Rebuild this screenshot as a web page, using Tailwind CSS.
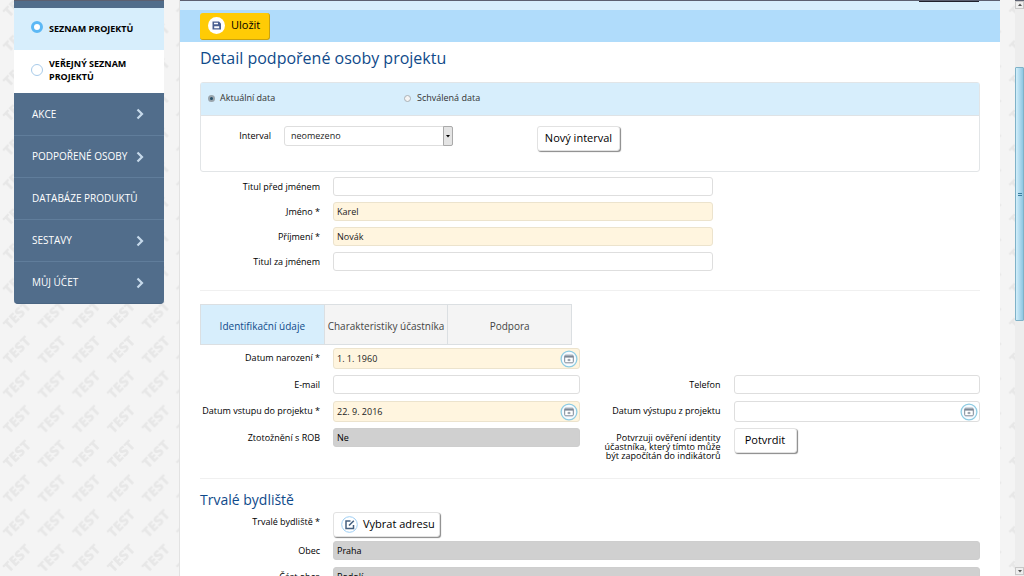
<!DOCTYPE html>
<html lang="cs">
<head>
<meta charset="utf-8">
<title>Detail podpořené osoby projektu</title>
<script src="https://cdn.jsdelivr.net/npm/@tailwindcss/browser@4"></script>
</head>
<body class="relative h-screen overflow-hidden bg-[#f4f4f4] font-['Open_Sans','Noto_Sans',sans-serif] text-[9px] font-medium text-black">
<svg width="0" height="0" class="absolute" aria-hidden="true">
  <symbol id="calendar" viewBox="0 0 18 18">
    <circle cx="9" cy="9" r="7.900" fill="#f7fbff" stroke="#8ccbe2" stroke-width="1.300"/>
    <rect x="4.700" y="5.200" width="8.600" height="7.600" rx="1" fill="#fff" stroke="#7c8896" stroke-width="1"/>
    <path d="M4.700 6.800h8.600" stroke="#7c8896" stroke-width="1.600"/>
    <path d="M7.500 10h3M9 8.800v2.400" stroke="#7c8896" stroke-width="1"/>
  </symbol>
  <symbol id="chevron" viewBox="0 0 8 12">
    <path d="M1.500 1.500L6 6l-4.500 4.500" fill="none" stroke="#c6d9ea" stroke-width="2.200"/>
  </symbol>
</svg>
<svg class="absolute inset-0 h-full w-full" aria-hidden="true">
  <defs>
    <pattern id="watermark" width="34.700" height="34.700" patternUnits="userSpaceOnUse" y="-13">
      <text x="17" y="21" transform="rotate(-45 17 16)" text-anchor="middle" font-family="Open Sans" font-weight="800" font-size="14" fill="#e7e7e7">TEST</text>
    </pattern>
  </defs>
  <rect width="100%" height="100%" fill="url(#watermark)"/>
</svg>

<div class="relative flex h-full">
  <nav class="mr-[15px] ml-[14px] w-[150px] shrink-0 text-[10px]">
    <div class="h-2 border-t border-[#5c6070] bg-[#516d8b]"></div>
    <a href="#" class="flex h-[42px] items-center bg-[#d7eefc] pl-[17px] text-[9px] font-bold"><span class="mr-1.5 mb-1 size-3 rounded-full border-[3px] border-[#5cb8f5] bg-white"></span>SEZNAM PROJEKTŮ</a>
    <a href="#" class="flex h-[43px] items-center bg-white pb-1 pl-[17px] text-[9px] leading-[13px] font-bold"><span class="mr-1.5 size-3 rounded-full border border-[#a8cbea] bg-white"></span><span>VEŘEJNÝ SEZNAM<br>PROJEKTŮ</span></a>
    <ul class="overflow-hidden rounded-b border-b border-[#4a6582] bg-[#516d8b] text-white">
      <li><a href="#" class="flex h-[42px] items-center justify-between pr-5 pl-[18px]">AKCE<svg class="h-3 w-2"><use href="#chevron"/></svg></a></li>
      <li><a href="#" class="flex h-[42px] items-center justify-between border-t border-[#607d9b] pr-5 pl-[18px]">PODPOŘENÉ OSOBY<svg class="h-3 w-2"><use href="#chevron"/></svg></a></li>
      <li><a href="#" class="flex h-[42px] items-center border-t border-[#607d9b] pl-[18px]">DATABÁZE PRODUKTŮ</a></li>
      <li><a href="#" class="flex h-[42px] items-center justify-between border-t border-[#607d9b] pr-5 pl-[18px]">SESTAVY<svg class="h-3 w-2"><use href="#chevron"/></svg></a></li>
      <li><a href="#" class="flex h-[42px] items-center justify-between border-t border-[#607d9b] pr-5 pl-[18px]">MŮJ ÚČET<svg class="h-3 w-2"><use href="#chevron"/></svg></a></li>
    </ul>
  </nav>

  <main class="mr-[15px] min-w-0 flex-1 overflow-hidden border-l border-[#e2e2e2] bg-white">
    <div class="flex h-2.5 justify-end border-t border-[#5c6070] bg-[#d7eefc] pr-[21px]"><span class="h-px w-[60px] bg-[#20222c]"></span></div>
    <div class="flex h-8 items-center bg-[#b0dcfb] pl-5">
      <button class="flex h-[27px] w-[70px] items-center gap-1.5 rounded-[3px] border-r border-b border-[#c9a20f] bg-[#ffcb05] pl-2 text-[11px]">
        <svg class="size-[17px]" viewBox="0 0 17 17"><circle cx="8.500" cy="8.500" r="8.500" fill="#fff"/><path d="M4.500 4.500h6.500l2 2v6h-8.500z" fill="#4a5f90"/><path d="M6 5.700h4v1.600H6zM6.200 9.300h5v2H6.200z" fill="#fff"/></svg>Uložit</button>
    </div>
    <div class="px-5">
      <h1 class="mt-1 mb-[11px] h-[25px] text-base leading-[25px] font-normal text-[#0f4a8a]">Detail podpořené osoby projektu</h1>
      <section class="mb-[5px] h-[90px] rounded-[3px] border border-[#e2e5e7]">
        <div class="flex h-8 items-center bg-[#d7eefc] pb-0.5 text-[#333]">
          <label class="flex w-[196px] items-center gap-[5px] pl-[7px]"><input type="radio" name="data" checked class="size-[7px] appearance-none rounded-full border border-[#9aa5ad] bg-white checked:border-2 checked:bg-[#24506a]">Aktuální data</label>
          <label class="flex items-center gap-1.5 pl-[7px]"><input type="radio" name="data" class="size-[7px] appearance-none rounded-full border border-[#a9b0b5] bg-[#f4f4f4] checked:border-2 checked:bg-[#24506a]">Schválená data</label>
        </div>
        <div class="flex items-start border-t border-[#dfe3e6] pt-2.5">
          <label for="interval" class="mr-[13px] w-[70px] text-right leading-5">Interval</label>
          <div class="relative">
            <select id="interval" class="block h-5 w-[169px] appearance-none rounded-[3px] border border-[#dedede] bg-white px-1.5 text-[#222]"><option>neomezeno</option></select>
            <span class="pointer-events-none absolute inset-y-0 right-0 flex w-2.5 items-center justify-center rounded-r-[2px] border border-[#aaa] bg-[#e4e4e4]"><svg class="size-1" viewBox="0 0 4 4"><path d="M0 1h4L2 3.500z"/></svg></span>
          </div>
          <button class="ml-[84px] h-[25px] w-[83px] rounded-[3px] border border-[#e2e2e2] bg-white text-[11px] shadow-[1px_1px_1px_#888]">Nový interval</button>
        </div>
      </section>

      <div class="grid w-[513px] grid-cols-[120px_1fr] items-center gap-x-[13px] gap-y-[6px]">
        <label for="t1" class="text-right">Titul před jménem</label><input id="t1" class="h-[19px] rounded-[3px] border border-[#dedede] bg-white px-[3px]">
        <label for="n1" class="text-right">Jméno *</label><input id="n1" value="Karel" class="h-[19px] rounded-[3px] border border-[#ece3cd] bg-[#fff5df] px-[3px] text-[#222]">
        <label for="n2" class="text-right">Příjmení *</label><input id="n2" value="Novák" class="h-[19px] rounded-[3px] border border-[#ece3cd] bg-[#fff5df] px-[3px] text-[#222]">
        <label for="t2" class="text-right">Titul za jménem</label><input id="t2" class="h-[19px] rounded-[3px] border border-[#dedede] bg-white px-[3px]">
      </div>
      <hr class="mt-[19px] mb-[13px] border-[#f0f0f0]">

      <div class="flex h-[41px] w-[372px] border border-[#dbdfe2] text-[10px] font-normal text-[#444]" role="tablist">
        <button role="tab" aria-selected="true" class="flex-1 bg-[#d7eefc] pt-1 text-[#0f4a8a]">Identifikační údaje</button>
        <button role="tab" class="flex-1 border-l border-[#dbdfe2] bg-[#f4f4f4] pt-1 whitespace-nowrap">Charakteristiky účastníka</button>
        <button role="tab" class="flex-1 border-l border-[#dbdfe2] bg-[#f4f4f4] pt-1">Podpora</button>
      </div>

      <div class="mt-[3px] grid grid-cols-[120px_1fr_128px_1fr] gap-x-[13px] gap-y-[6px]">
        <label for="d1" class="text-right leading-5">Datum narození *</label>
        <div class="flex h-[21px] items-center rounded-[3px] border border-[#ece3cd] bg-[#fff5df]"><input id="d1" value="1. 1. 1960" class="min-w-0 flex-1 px-[3px] text-[#222]"><button aria-label="Vybrat datum" class="mr-px"><svg class="size-[18px]"><use href="#calendar"/></svg></button></div>
        <span></span><span></span>
        <label for="em" class="text-right leading-5">E-mail</label><input id="em" class="h-[19px] min-w-0 rounded-[3px] border border-[#dedede] bg-white px-[3px]">
        <label for="tel" class="text-right leading-5">Telefon</label><input id="tel" class="h-[19px] min-w-0 rounded-[3px] border border-[#dedede] bg-white px-[3px]">
        <label for="d2" class="text-right leading-5">Datum vstupu do projektu *</label>
        <div class="flex h-[21px] items-center rounded-[3px] border border-[#ece3cd] bg-[#fff5df]"><input id="d2" value="22. 9. 2016" class="min-w-0 flex-1 px-[3px] text-[#222]"><button aria-label="Vybrat datum" class="mr-px"><svg class="size-[18px]"><use href="#calendar"/></svg></button></div>
        <label for="d3" class="text-right leading-5">Datum výstupu z projektu</label>
        <div class="flex h-[21px] items-center rounded-[3px] border border-[#dedede] bg-white"><input id="d3" class="min-w-0 flex-1 px-[3px]"><button aria-label="Vybrat datum" class="mr-px"><svg class="size-[18px]"><use href="#calendar"/></svg></button></div>
        <label for="rob" class="text-right leading-5">Ztotožnění s ROB</label><input id="rob" readonly value="Ne" class="h-[19px] min-w-0 rounded-[3px] border border-[#cecece] bg-[#d0d0d0] px-[3px]">
        <label for="ok" class="-ml-2 pt-[5px] text-right leading-[9px]">Potvrzuji ověření identity<br>účastníka, který tímto může<br>být započítán do indikátorů</label>
        <button id="ok" class="h-[25px] w-[63px] rounded-[3px] border border-[#e2e2e2] bg-white text-[11px] shadow-[1px_1px_1px_#888]">Potvrdit</button>
      </div>
      <hr class="mt-[18px] mb-[9px] border-[#f0f0f0]">
      <h2 class="h-6 text-sm leading-6 font-normal text-[#0f4a8a]">Trvalé bydliště</h2>
      <div class="grid grid-cols-[120px_1fr] gap-x-[13px] gap-y-[7px]">
        <label for="adr" class="text-right leading-5">Trvalé bydliště *</label>
        <button id="adr" class="-mb-[3px] flex h-[25px] w-[107px] items-center gap-[5px] rounded-[3px] border border-[#e2e2e2] bg-white pl-[7px] text-[11px] whitespace-nowrap shadow-[1px_1px_1px_#888]"><svg class="size-[17px] shrink-0" viewBox="0 0 17 17" fill="none"><circle cx="8.500" cy="8.500" r="7.800" stroke="#9dcdf3"/><path d="M9.500 5H5v7.500h7.500V9" stroke="#456080" stroke-width="1.500"/><path d="M8 9.500l4.800-4.800" stroke="#456080" stroke-width="1.600"/></svg>Vybrat adresu</button>
        <label for="obec" class="text-right leading-[19px]">Obec</label><input id="obec" readonly value="Praha" class="h-[19px] rounded-[3px] border border-[#cecece] bg-[#d0d0d0] px-[3px]">
        <label for="cast" class="text-right leading-[19px]">Část obce</label><input id="cast" readonly value="Podolí" class="h-[19px] rounded-[3px] border border-[#cecece] bg-[#d0d0d0] px-[3px]">
      </div>
    </div>
  </main>

  <div class="flex w-[9px] shrink-0 flex-col border-t border-[#5c6070] bg-[#ededed]" aria-hidden="true">
    <div class="flex h-2 items-center justify-center border border-[#c8c8c8] bg-[#eee]"><svg class="size-1" viewBox="0 0 4 4"><path d="M0 3h4L2 .5z" fill="#555"/></svg></div>
    <div class="mt-[58px] flex h-[254px] flex-col items-center justify-center gap-px rounded-[1px] border border-[#7fb2c8] bg-linear-to-r from-[#d3effb] to-[#8fc7e2]"><i class="h-px w-1 bg-[#3c7f9e]"></i><i class="h-px w-1 bg-[#3c7f9e]"></i></div>
    <div class="mt-auto mb-px flex h-2 items-center justify-center border border-[#c8c8c8] bg-[#eee]"><svg class="size-1" viewBox="0 0 4 4"><path d="M0 1h4L2 3.500z" fill="#555"/></svg></div>
  </div>
</div>
</body>
</html>
